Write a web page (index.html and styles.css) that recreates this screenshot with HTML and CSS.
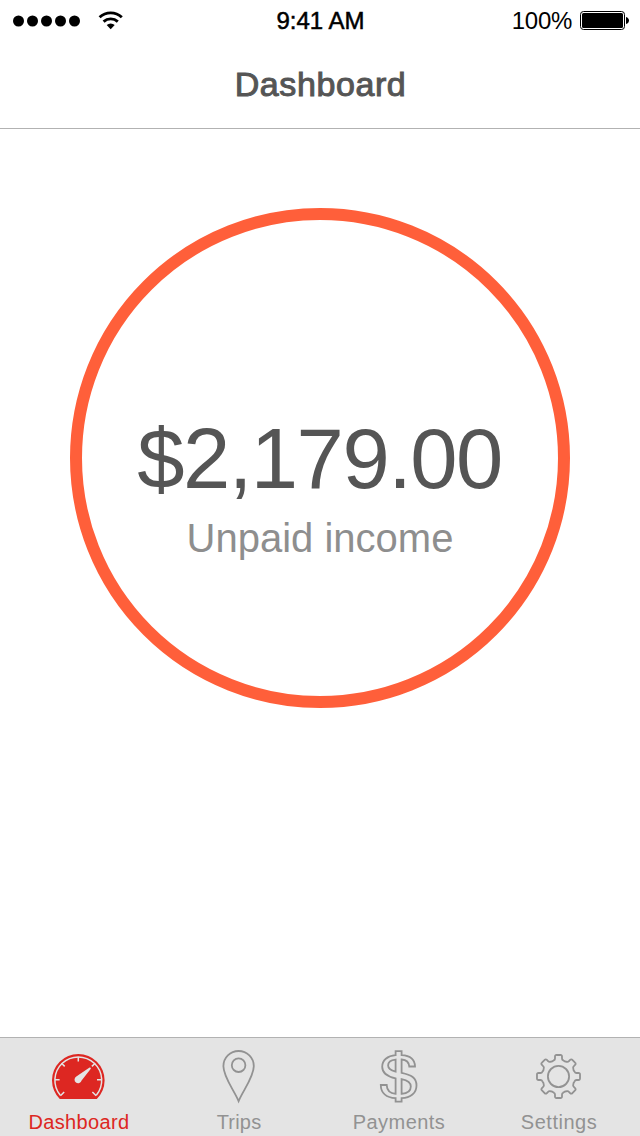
FILE: index.html
```html
<!DOCTYPE html>
<html lang="en">
<head>
<meta charset="utf-8">
<title>Dashboard</title>
<link rel="stylesheet" href="styles.css">
</head>
<body>
<div class="app">
  <div class="status">
    <div class="signal">
      <svg width="68" height="12" viewBox="0 0 68 12"><circle cx="5.5" cy="6" r="5.5"/><circle cx="19.5" cy="6" r="5.5"/><circle cx="33.5" cy="6" r="5.5"/><circle cx="47.5" cy="6" r="5.5"/><circle cx="61.5" cy="6" r="5.5"/></svg>
      <svg class="wifi" width="26" height="20" viewBox="0 0 26 20"><g fill="none" stroke="#000" stroke-width="2.9"><path d="M1.6 7.2a16.3 16.3 0 0 1 22.2 0"/><path d="M5.6 11.6a10.6 10.6 0 0 1 14.2 0"/></g><path d="M8.7 15a6 6 0 0 1 8 0L12.7 19.2Z"/></svg>
    </div>
    <div class="time">9:41 AM</div>
    <div class="battery">
      <span class="percent">100%</span>
      <svg width="49" height="20" viewBox="0 0 49 20"><rect x=".5" y=".5" width="44" height="18" rx="3" fill="none" stroke="#000"/><rect x="2" y="2" width="41" height="15" rx="1.5"/><path d="M46 6c4 1 4 6 0 7Z"/></svg>
    </div>
  </div>
  <header class="navbar"><h1 class="title">Dashboard</h1></header>
  <main class="content">
    <div class="ring">
      <div class="amount">$2,179.00</div>
      <div class="caption">Unpaid income</div>
    </div>
  </main>
  <nav class="tabs">
    <div class="tab active">
      <svg class="icon" width="61" height="56" viewBox="0 0 61 56">
        <path fill="#dd2722" d="M11.8 51A26.3 26.3 0 1 1 48.8 51Z"/>
        <g fill="none" stroke="#e4e4e4" stroke-width="1.5"><path d="M12.3 47.3A23.4 23.4 0 1 1 48.3 47.3"/><path d="M30.3 9v4.6M13.5 15.2l3.2 3.2M7 31.8h4.6M53.6 31.8h-4.6M47.1 15.2l-3.2 3.2M12.4 47.8l3.8-3.8M48.2 47.8l-3.8-3.8"/></g>
        <path fill="#e4e4e4" d="M41.2 19.8c1.2-.9 2.2.2 1.4 1.3L33.6 32.6A3.6 3.6 0 1 1 28.3 28.6Z"/>
      </svg>
      <span class="label dashboard">Dashboard</span>
    </div>
    <div class="tab">
      <svg class="icon line" width="61" height="56" viewBox="0 0 61 56"><path d="M30.6 53.2C26.5 43 15.4 29 15.4 18.2a15.2 15.2 0 0 1 30.4 0C45.8 29 34.7 43 30.6 53.2Z"/><circle cx="30.6" cy="17.2" r="6.8"/></svg>
      <span class="label trips">Trips</span>
    </div>
    <div class="tab">
      <svg class="icon line" width="61" height="56" viewBox="0 0 61 56"><path d="M27.6 3.2h6v4c8.4.5 13.3 4.6 13.4 11.3h-5.7c-.3-4.4-2.9-6.6-7.7-7v13.3c9.7 2 14.9 5 14.9 12.6 0 7.6-5.9 12.3-14.9 12.8v3.4h-6v-3.4c-9.3-.5-14.8-5.4-14.8-13.2h5.9c.2 5.4 3.2 8.3 8.9 8.8V30.4C18.9 28.6 14.2 25.4 14.2 18.8c0-6.5 5.2-11 13.4-11.6Z"/><path d="M27.6 11.6v12c-4.8-1.2-7.5-2.7-7.5-6 0-3.4 2.9-5.6 7.5-6ZM33.6 31.2v14.6c5.7-.3 9.2-3 9.2-7.3 0-4.2-3.2-6-9.2-7.3Z"/></svg>
      <span class="label payments">Payments</span>
    </div>
    <div class="tab">
      <svg class="icon line" width="61" height="56" viewBox="0 0 61 56"><circle cx="30.5" cy="28.5" r="10.6"/><path id="gear" d=""/></svg>
      <span class="label settings">Settings</span>
    </div>
  </nav>
</div>
<script src="gear.js"></script>
</body>
</html>
```
FILE: styles.css
```css
* { box-sizing: border-box; }
body { margin: 0; background: #fff; font-family: "Liberation Sans", Arial, sans-serif; }
.app { width: 640px; height: 1136px; display: flex; flex-direction: column; overflow: hidden; }
.status { height: 40px; display: grid; grid-template-columns: 1fr auto 1fr; align-items: center; padding: 2px 11px 0 13px; font-size: 24px; line-height: 38px; }
.signal { display: flex; align-items: center; gap: 17px; }
.wifi { margin-bottom: 2px; }
.time { -webkit-text-stroke: .5px #000; padding-right: 1px; }
.battery { display: flex; align-items: center; justify-content: flex-end; gap: 8px; }
.percent { letter-spacing: -.3px; }
.navbar { height: 89px; border-bottom: 1px solid #b2b2b2; display: flex; justify-content: center; }
.title { margin: 24px 0 0; font-size: 34px; line-height: 40px; font-weight: 400; color: #555; letter-spacing: .6px; -webkit-text-stroke: 1px #555; padding-left: 1px; }
.content { flex: 1; display: flex; justify-content: center; align-items: flex-start; padding-top: 79px; }
.ring { width: 500px; height: 500px; border: 12px solid #ff5f3a; border-radius: 50%; padding-top: 189px; text-align: center; }
.amount { font-size: 85px; line-height: 100px; color: #555; letter-spacing: -1.5px; padding-right: 1px; }
.caption { font-size: 40px; line-height: 46px; color: #8e8e8e; padding-top: 6px; }
.tabs { height: 99px; display: flex; background: #e4e4e4; border-top: 1px solid #b2b2b2; color: #929292; }
.tab { width: 160px; display: flex; flex-direction: column; align-items: center; padding: 10px 3px 0 0; }
.active { color: #dd2722; }
.icon { flex: none; }
.line { fill: none; stroke: #929292; stroke-width: 1.8; }
.label { font-size: 20px; line-height: 24px; margin-top: 6px; padding-left: 1px; }
.dashboard { letter-spacing: .35px; }
.trips { letter-spacing: .2px; }
.payments { letter-spacing: .45px; }
.settings { letter-spacing: .5px; }
```
FILE: gear.js
```js
// Eight rounded teeth around the gear body.
const polar = (r, deg) => {
  const a = deg * Math.PI / 180;
  return (30.5 + r * Math.sin(a)).toFixed(2) + " " + (28.5 - r * Math.cos(a)).toFixed(2);
};
let d = "";
for (let i = 0; i < 8; i++) {
  const a = i * 45;
  d += (i ? "L" : "M") + polar(16.8, a - 16.5);
  d += "Q" + polar(17, a - 11.5) + " " + polar(18.6, a - 10.8);
  d += "L" + polar(20.2, a - 10) + "Q" + polar(21.9, a - 9.2) + " " + polar(21.6, a - 5);
  d += "L" + polar(21.6, a + 5) + "Q" + polar(21.9, a + 9.2) + " " + polar(20.2, a + 10);
  d += "L" + polar(18.6, a + 10.8) + "Q" + polar(17, a + 11.5) + " " + polar(16.8, a + 16.5);
  d += "Q" + polar(16, a + 22.5) + " " + polar(16.8, a + 28.5);
}
document.getElementById("gear").setAttribute("d", d + "Z");
```
